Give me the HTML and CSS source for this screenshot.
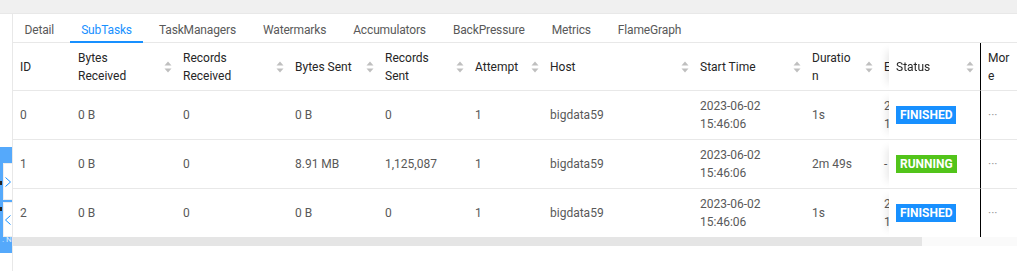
FILE: index.html
```html
<!DOCTYPE html>
<html lang="en">
<head>
    <meta charset="UTF-8">
    <meta name="viewport" content="width=device-width, initial-scale=1.0">
    <title>Job Vertex - SubTasks</title>
    <link rel="stylesheet" href="styles.css">
</head>
<body>
    <div class="topbar"></div>

    <div class="page">
        <nav class="tabs">
            <span class="tab">Detail</span>
            <span class="tab active">SubTasks</span>
            <span class="tab">TaskManagers</span>
            <span class="tab">Watermarks</span>
            <span class="tab">Accumulators</span>
            <span class="tab">BackPressure</span>
            <span class="tab">Metrics</span>
            <span class="tab">FlameGraph</span>
        </nav>

        <div class="table-wrap">
            <table class="subtasks">
                <colgroup>
                    <col style="width:58px">
                    <col style="width:105px">
                    <col style="width:112px">
                    <col style="width:90px">
                    <col style="width:90px">
                    <col style="width:75px">
                    <col style="width:150px">
                    <col style="width:112px">
                    <col style="width:72px">
                    <col style="width:117px">
                    <col style="width:91px">
                    <col style="width:37px">
                </colgroup>
                <thead>
                    <tr id="head-row"></tr>
                </thead>
                <tbody id="rows"></tbody>
            </table>
        </div>
        <div class="scrollbar"><div class="thumb"></div></div>
    </div>

    <!-- panel lateral -->
    <div class="side-tool">
        <span class="side-mark mark-1"></span>
        <span class="side-mark mark-2"></span>
        <button class="side-btn btn-next">
            <svg width="6" height="10" viewBox="0 0 6 10"><polyline points="0.5,0.5 5.5,5 0.5,9.5" fill="none" stroke="#1890ff" stroke-width="1"/></svg>
        </button>
        <button class="side-btn btn-prev">
            <svg width="6" height="10" viewBox="0 0 6 10"><polyline points="5.5,0.5 0.5,5 5.5,9.5" fill="none" stroke="#1890ff" stroke-width="1"/></svg>
        </button>
        <span class="side-label">. N</span>
    </div>

    <script>
        const columns = [
            { title: 'ID', sort: false },
            { title: 'Bytes<br>Received', sort: true },
            { title: 'Records<br>Received', sort: true },
            { title: 'Bytes Sent', sort: true },
            { title: 'Records<br>Sent', sort: true },
            { title: 'Attempt', sort: true },
            { title: 'Host', sort: true },
            { title: 'Start Time', sort: true },
            { title: 'Duratio<br>n', sort: true },
            { title: 'End Time', sort: true, cls: 'col-end' },
            { title: 'Status', sort: true, cls: 'col-status' },
            { title: 'Mor<br>e', sort: false, cls: 'col-more' }
        ];

        const subtasks = [
            { id: 0, bytesIn: '0 B', recordsIn: 0, bytesOut: '0 B', recordsOut: '0', attempt: 1, host: 'bigdata59', start: '2023-06-02<br>15:46:06', duration: '1s', end: '2023-06-02<br>15:46:07', status: 'FINISHED' },
            { id: 1, bytesIn: '0 B', recordsIn: 0, bytesOut: '8.91 MB', recordsOut: '1,125,087', attempt: 1, host: 'bigdata59', start: '2023-06-02<br>15:46:06', duration: '2m 49s', end: '-', status: 'RUNNING' },
            { id: 2, bytesIn: '0 B', recordsIn: 0, bytesOut: '0 B', recordsOut: '0', attempt: 1, host: 'bigdata59', start: '2023-06-02<br>15:46:06', duration: '1s', end: '2023-06-02<br>15:46:07', status: 'FINISHED' }
        ];

        const sorterIcon = '<svg class="sorter" width="8" height="12" viewBox="0 0 8 12"><path d="M4 0.5 L7.5 4.5 L0.5 4.5 Z" fill="#bfbfbf"/><path d="M4 11.5 L7.5 7.5 L0.5 7.5 Z" fill="#bfbfbf"/></svg>';

        const headRow = document.getElementById('head-row');
        headRow.innerHTML = columns.map(col => `
            <th class="${col.cls || ''}">
                <div class="head-cell">
                    <span>${col.title}</span>
                    ${col.sort ? sorterIcon : ''}
                </div>
            </th>`).join('');

        const rows = document.getElementById('rows');
        rows.innerHTML = subtasks.map(task => `
            <tr>
                <td>${task.id}</td>
                <td>${task.bytesIn}</td>
                <td>${task.recordsIn}</td>
                <td>${task.bytesOut}</td>
                <td>${task.recordsOut}</td>
                <td>${task.attempt}</td>
                <td>${task.host}</td>
                <td>${task.start}</td>
                <td>${task.duration}</td>
                <td class="col-end">${task.end}</td>
                <td class="col-status"><span class="tag tag-${task.status.toLowerCase()}">${task.status}</span></td>
                <td class="col-more"><span class="more">···</span></td>
            </tr>`).join('');
    </script>
</body>
</html>
```

FILE: styles.css
```css
body {
    margin: 0;
    font-family: Roboto, "Noto Sans", sans-serif;
    font-size: 12px;
    color: #595959;
    background: #fff;
}
.topbar {
    height: 13px;
    background: #f0f0f0;
    border-bottom: 1px solid #e8e8e8;
}
.page {
    margin-left: 12px;
    border-left: 1px solid #e8e8e8;
    height: 257px;
}
.tabs {
    display: flex;
    align-items: flex-start;
    gap: 4px;
    height: 28px;
    border-bottom: 1px solid #e8e8e8;
}
.tab {
    height: 29px;
    padding: 2px 11.5px 0;
    line-height: 28px;
    letter-spacing: -0.15px;
    color: #595959;
    box-sizing: border-box;
}
.tab.active {
    color: #1890ff;
    box-shadow: inset 0 -2px #1890ff;
}
.table-wrap {
    width: 1004px;
    overflow: hidden;
}
.subtasks {
    width: 1109px;
    table-layout: fixed;
    border-collapse: separate;
    border-spacing: 0;
}
.subtasks th,
.subtasks td {
    padding: 0 4px 0 7px;
    border-bottom: 1px solid #e8e8e8;
    background: #fff;
    text-align: left;
    line-height: 18px;
    white-space: nowrap;
    overflow: hidden;
}
.subtasks th {
    height: 47px;
    font-weight: normal;
    color: #262626;
}
.subtasks td {
    height: 48px;
}
.subtasks tbody tr:last-child td {
    border-bottom: none;
}
.head-cell {
    display: flex;
    align-items: center;
    justify-content: space-between;
}
.sorter {
    flex-shrink: 0;
}
.col-end {
    max-width: 117px;
}
.col-status {
    position: sticky;
    right: 37px;
    z-index: 1;
    padding-right: 6px !important;
    box-shadow: -10px 0 8px -8px rgba(0, 0, 0, 0.1);
    overflow: visible !important;
}
.col-more {
    position: sticky;
    right: 0;
    z-index: 1;
    border-left: 1px solid #000;
}
.tag {
    display: inline-block;
    padding: 0 4px;
    line-height: 18px;
    font-weight: bold;
    color: #fff;
}
.tag-finished {
    background: #1890ff;
}
.tag-running {
    background: #52c41a;
}
.more {
    color: #999;
}
.scrollbar {
    width: 1004px;
    height: 9px;
    background: #fafafa;
}
.thumb {
    width: 909px;
    height: 100%;
    background: #e5e5e5;
}
.side-tool {
    position: absolute;
    left: 0;
    top: 147px;
    width: 12px;
    height: 106px;
    background: #55a9fb;
}
.side-mark {
    position: absolute;
    left: 0;
    width: 2px;
    height: 4px;
    background: #222;
}
.mark-1 {
    top: 34px;
}
.mark-2 {
    top: 60px;
}
.side-btn {
    position: absolute;
    left: 3px;
    width: 9px;
    padding: 0;
    background: #fff;
    border: 1px solid #eeeeee;
    border-right: none;
    display: flex;
    align-items: center;
    justify-content: center;
}
.btn-next {
    top: 16px;
    height: 37px;
}
.btn-prev {
    top: 55px;
    height: 35px;
}
.side-label {
    position: absolute;
    left: 2px;
    top: 88px;
    font-size: 8px;
    color: #dceeff;
    line-height: 10px;
    white-space: nowrap;
    overflow: hidden;
    width: 10px;
}
```
